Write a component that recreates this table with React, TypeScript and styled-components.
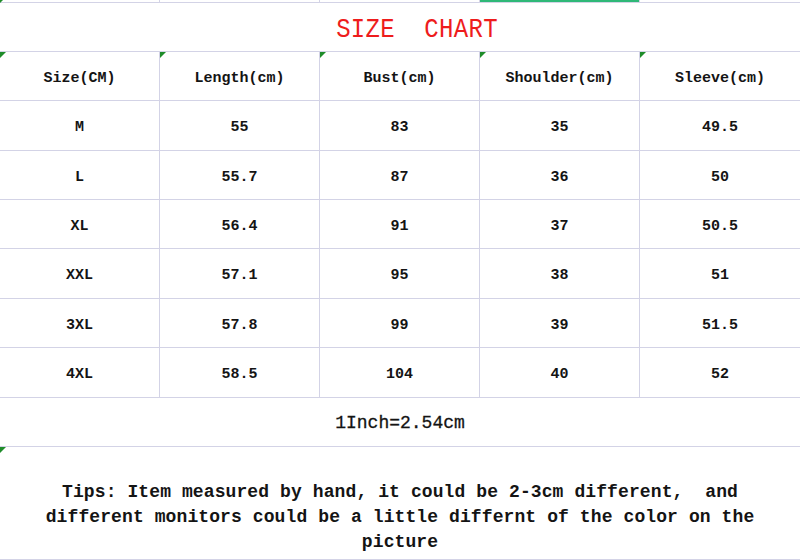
import styled, { createGlobalStyle } from "styled-components";

const GlobalStyle = createGlobalStyle`
  html, body {
    margin: 0;
    padding: 0;
    background: #fff;
  }
`;

const rows = [
  ["M", "55", "83", "35", "49.5"],
  ["L", "55.7", "87", "36", "50"],
  ["XL", "56.4", "91", "37", "50.5"],
  ["XXL", "57.1", "95", "38", "51"],
  ["3XL", "57.8", "99", "39", "51.5"],
  ["4XL", "58.5", "104", "40", "52"],
];

const heads = ["Size(CM)", "Length(cm)", "Bust(cm)", "Shoulder(cm)", "Sleeve(cm)"];

// row heights picked so the grid lines land where the sheet has them
const rowHeights = [49, 50, 49, 49, 50, 49, 50];

const App = () => {
  return (
    <Sheet>
      <GlobalStyle />
      <TopStrip>
        {[0, 1, 2, 3, 4].map((i) => (
          <StripCell key={i} selected={i === 3} flag={i === 0} last={i === 4} />
        ))}
      </TopStrip>

      <TitleRow>
        <Title>SIZE&nbsp;&nbsp;CHART</Title>
      </TitleRow>

      <Row height={49}>
        {heads.map((h, i) => (
          <Cell key={h} flag last={i === 4}>
            {h}
          </Cell>
        ))}
      </Row>

      {rows.map((r, ri) => (
        <Row key={r[0]} height={rowHeights[ri + 1]}>
          {r.map((v, i) => (
            <Cell key={i} last={i === 4}>
              {v}
            </Cell>
          ))}
        </Row>
      ))}

      <FullRow height={49}>1Inch=2.54cm</FullRow>

      <TipsRow>
        <Tips>
          Tips: Item measured by hand, it could be 2-3cm different,&nbsp; and
          different monitors could be a little differnt of the color on the
          picture
        </Tips>
      </TipsRow>
    </Sheet>
  );
};

export default App;

const line = "#d3d3e6";
const flagGreen = "#1f8c2a";

const Sheet = styled.div`
  width: 800px;
  height: 560px;
  overflow: hidden;
  background: #fff;
  color: #141414;
  font-family: "Liberation Mono", "DejaVu Sans Mono", monospace;
  font-weight: bold;
`;

const TopStrip = styled.div`
  display: grid;
  grid-template-columns: repeat(5, 160px);
  height: 3px;
  border-bottom: 1px solid ${line};
  box-sizing: border-box;
`;

const StripCell = styled.div<{ selected?: boolean; flag?: boolean; last?: boolean }>`
  position: relative;
  height: 2px;
  border-right: ${(p) => (p.last ? "none" : `1px solid ${line}`)};
  background: ${(p) => (p.selected ? "#2fb877" : "transparent")};

  &::before {
    content: "";
    display: ${(p) => (p.flag ? "block" : "none")};
    position: absolute;
    left: 0;
    top: 0;
    border-top: 3px solid ${flagGreen};
    border-right: 3px solid transparent;
  }
`;

const TitleRow = styled.div`
  height: 49px;
  box-sizing: border-box;
  border-bottom: 1px solid ${line};
  display: flex;
  align-items: center;
  justify-content: center;
  padding-left: 34px;
  padding-top: 4px;
`;

const Title = styled.div`
  font-family: "Liberation Mono", "DejaVu Sans Mono", monospace;
  font-weight: normal;
  font-size: 24px;
  color: #ee1c1c;
  transform: scaleY(1.15);
  letter-spacing: 0.3px;
`;

const Row = styled.div<{ height: number }>`
  display: grid;
  grid-template-columns: repeat(5, 160px);
  height: ${(p) => p.height}px;
`;

const Cell = styled.div<{ flag?: boolean; last?: boolean }>`
  position: relative;
  box-sizing: border-box;
  border-bottom: 1px solid ${line};
  border-right: ${(p) => (p.last ? "none" : `1px solid ${line}`)};
  display: flex;
  align-items: center;
  justify-content: center;
  padding-top: 4px;
  font-size: 15px;

  &::before {
    content: "";
    display: ${(p) => (p.flag ? "block" : "none")};
    position: absolute;
    left: 0;
    top: 0;
    border-top: 6px solid ${flagGreen};
    border-right: 6px solid transparent;
  }
`;

const FullRow = styled.div<{ height: number }>`
  height: ${(p) => p.height}px;
  box-sizing: border-box;
  border-bottom: 1px solid ${line};
  display: flex;
  align-items: center;
  justify-content: center;
  padding-top: 2px;
  font-size: 18px;
  font-weight: normal;
  -webkit-text-stroke: 0.3px #141414;
`;

const TipsRow = styled.div`
  position: relative;
  height: 113px;
  box-sizing: border-box;
  border-bottom: 1px solid ${line};
  display: flex;
  justify-content: center;
  padding-top: 33px;

  &::before {
    content: "";
    position: absolute;
    left: 0;
    top: 0;
    border-top: 6px solid ${flagGreen};
    border-right: 6px solid transparent;
  }
`;

const Tips = styled.div`
  width: 770px;
  text-align: center;
  font-size: 18px;
  line-height: 25px;
  letter-spacing: 0.1px;
`;
